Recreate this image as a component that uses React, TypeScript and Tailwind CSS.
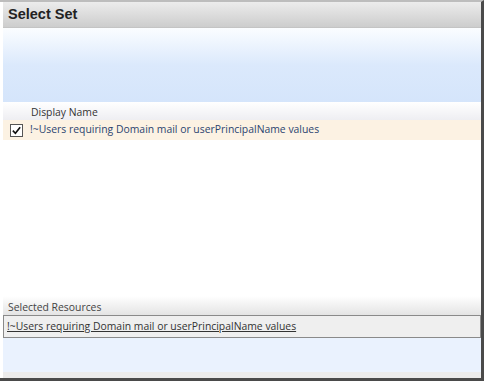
export default function App() {
  const item = '!~Users requiring Domain mail or userPrincipalName values';
  return (
    <div className="w-[486px] h-[385px] bg-white font-['Open_Sans',sans-serif] overflow-hidden">
      <div className="w-[484px] h-[381px] flex flex-col border-r-[3px] border-b-[3px] border-[#4a4a4a] border-t-2 border-t-[#bdbdbd] pl-[3px]">
        <div className="h-[26px] flex items-center px-[5px] bg-gradient-to-b from-[#ececec] to-[#cdcdcd] border-b border-[#c4c4c4]">
          <span className="font-['Liberation_Sans',sans-serif] font-bold text-[14.5px] text-[#222]">Select Set</span>
        </div>
        <div className="h-[74px] bg-gradient-to-b from-[#fbfdff] via-[#dbe9fc] to-[#d5e5fb]" />
        <div className="h-[18px] flex items-end pl-[28px] bg-gradient-to-b from-white to-[#eeeef2] text-[10.4px] text-[#333] leading-[16px]">
          Display Name
        </div>
        <div className="h-[20px] flex items-center gap-[7px] pl-[7px] bg-[#fcf2e3] text-[10.4px] text-[#2b4470]">
          <span className="w-[13px] h-[13px] border border-[#555] bg-white flex items-center justify-center">
            <svg viewBox="0 0 12 12" className="w-[11px] h-[11px]">
              <path d="M2 6.2 L4.8 9 L10 2.5" fill="none" stroke="#111" strokeWidth="1.8" />
            </svg>
          </span>
          <span>{item}</span>
        </div>
        <div className="flex-1 bg-white" />
        <div className="h-[19px] flex items-end px-[5px] bg-gradient-to-b from-white to-[#e4e4e4] text-[10.4px] text-[#444] leading-[16px]">
          Selected Resources
        </div>
        <div className="h-[23px] flex items-center px-[3px] bg-[#efefef] border border-[#8a8a8a] text-[10.4px] text-[#333] underline">
          {item}
        </div>
        <div className="h-[34px] bg-[#eaf2fe]" />
        <div className="h-[6px] bg-[#ebebeb]" />
      </div>
    </div>
  );
}
